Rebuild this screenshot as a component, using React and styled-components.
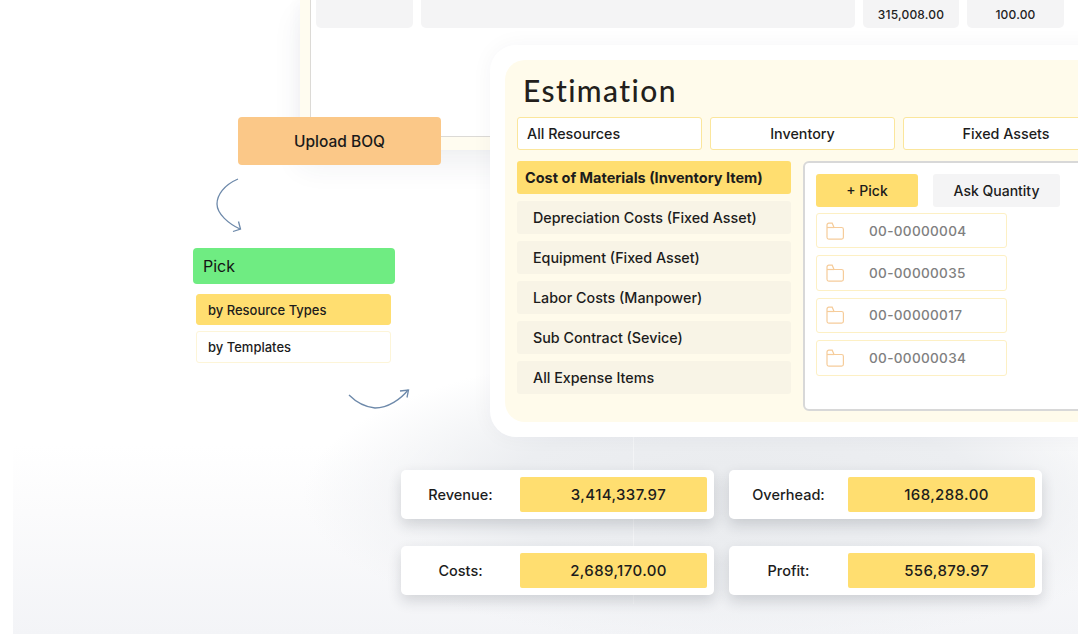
import React from 'react';
import styled, { createGlobalStyle } from 'styled-components';

const GlobalStyle = createGlobalStyle`
  html, body {
    margin: 0;
    padding: 0;
    background: #ffffff;
  }
  body {
    font-family: "Inter", "Noto Sans", sans-serif;
    color: #1c1c1c;
  }
`;

const Canvas = styled.div`
  position: relative;
  width: 1078px;
  height: 634px;
  overflow: hidden;
  background: #ffffff;
`;

const Backdrop = styled.div`
  position: absolute;
  left: 13px;
  right: 0;
  top: 330px;
  bottom: 0;
  background:
    radial-gradient(ellipse 440px 150px at 730px 165px, #e9ebee 0%, #eceef1 55%, rgba(238, 240, 243, 0) 100%),
    linear-gradient(180deg, #ffffff 0%, #ffffff 38%, #fbfbfc 60%, #f3f4f7 100%);
`;

const Hairline = styled.div`
  position: absolute;
  left: 633px;
  top: 437px;
  bottom: 30px;
  width: 1px;
  background: rgba(255, 255, 255, 0.4);
`;

/* table window peeking out behind the estimation panel */
const BackWindow = styled.div`
  position: absolute;
  left: 300px;
  top: 0;
  width: 860px;
  height: 150px;
  display: flex;
  padding: 0 0 13px 10px;
  box-sizing: border-box;
  background: #fffcf0;
  box-shadow: 0 16px 28px rgba(40, 50, 90, 0.07), -6px 0 10px rgba(40, 50, 90, 0.02);
`;

const Sheet = styled.div`
  flex: 1;
  display: flex;
  align-items: flex-start;
  gap: 8px;
  padding-left: 5px;
  background: #ffffff;
  border-left: 1px solid #dcdad6;
  border-bottom: 1px solid #dcdad6;
`;

const Cell = styled.div`
  width: ${(p) => p.$width}px;
  height: 28px;
  display: flex;
  align-items: center;
  justify-content: center;
  border-radius: 0 0 5px 5px;
  background: #f4f4f5;
  font-size: 12px;
  font-weight: 500;
  letter-spacing: 0.2px;
  color: #222222;
`;

const UploadNode = styled.div`
  position: absolute;
  left: 238px;
  top: 117px;
  width: 203px;
  height: 48px;
  display: flex;
  align-items: center;
  justify-content: center;
  border-radius: 4px;
  background: #fbc888;
  font-size: 15.5px;
  font-weight: 500;
  color: #1a1a1a;
`;

const PickNode = styled.div`
  position: absolute;
  left: 193px;
  top: 248px;
  width: 202px;
  display: flex;
  flex-direction: column;
`;

const PickHeader = styled.div`
  height: 36px;
  display: flex;
  align-items: center;
  padding-left: 10px;
  margin-bottom: 10px;
  border-radius: 4px;
  background: #6fec82;
  font-size: 16px;
  color: #141414;
`;

const PickOption = styled.div`
  box-sizing: border-box;
  width: 195px;
  height: ${(p) => (p.$active ? 31 : 32)}px;
  margin: 0 0 6px 3px;
  display: flex;
  align-items: center;
  padding-left: 11px;
  border-radius: 3px;
  background: ${(p) => (p.$active ? '#ffde70' : '#ffffff')};
  border: 1px solid ${(p) => (p.$active ? '#ffde70' : '#fdf5d8')};
  font-size: 13px;
  font-weight: 500;
  color: #1c1c1c;
`;

const ArrowDown = styled.svg`
  position: absolute;
  left: 210px;
  top: 175px;
`;

const ArrowRight = styled.svg`
  position: absolute;
  left: 345px;
  top: 385px;
`;

const Panel = styled.div`
  position: absolute;
  left: 490px;
  top: 45px;
  width: 640px;
  height: 392px;
  box-sizing: border-box;
  padding: 15px;
  border-radius: 26px;
  background: #ffffff;
  box-shadow: 0 0 22px rgba(40, 40, 60, 0.045);
`;

const PanelInner = styled.div`
  height: 100%;
  box-sizing: border-box;
  padding: 0 12px;
  border-radius: 20px;
  background: #fffbeb;
`;

const Title = styled.h1`
  margin: 0 0 0 6px;
  height: 57px;
  line-height: 60px;
  font-family: "Lato", "Noto Sans", sans-serif;
  font-size: 30px;
  font-weight: 500;
  letter-spacing: 1.4px;
  color: #231f1c;
`;

const Tabs = styled.div`
  display: flex;
  gap: 8px;
  margin-bottom: 11px;
`;

const Tab = styled.div`
  box-sizing: border-box;
  flex: none;
  width: ${(p) => p.$width}px;
  height: 33px;
  display: flex;
  align-items: center;
  justify-content: ${(p) => (p.$left ? 'flex-start' : 'center')};
  padding-left: ${(p) => (p.$left ? 9 : 0)}px;
  border: 1px solid #fbe69c;
  border-radius: 3px;
  background: #ffffff;
  font-size: 14.300px;
  font-weight: 500;
  color: #1c1c1c;
`;

const Columns = styled.div`
  display: flex;
  gap: 12px;
`;

const CostList = styled.div`
  width: 274px;
  flex: none;
  display: flex;
  flex-direction: column;
  gap: 7px;
`;

const CostItem = styled.div`
  height: 33px;
  display: flex;
  align-items: center;
  padding-left: ${(p) => (p.$active ? 8 : 16)}px;
  border-radius: 3px;
  background: ${(p) => (p.$active ? '#ffde70' : '#f8f4e6')};
  font-size: ${(p) => (p.$active ? 14.5 : 14.3)}px;
  font-weight: ${(p) => (p.$active ? 700 : 500)};
  color: #1c1c1c;
  white-space: nowrap;
`;

const PickBox = styled.div`
  box-sizing: border-box;
  width: 320px;
  height: 250px;
  padding: 11px 11px;
  border: 2px solid #d8d8d8;
  border-radius: 6px;
  background: #ffffff;
`;

const PickActions = styled.div`
  display: flex;
  gap: 15px;
  margin-bottom: 6px;
`;

const ActionButton = styled.div`
  width: ${(p) => p.$width}px;
  height: 33px;
  display: flex;
  align-items: center;
  justify-content: center;
  border-radius: 3px;
  background: ${(p) => (p.$primary ? '#ffde70' : '#f4f4f5')};
  font-size: 14px;
  font-weight: 500;
  color: #1c1c1c;
`;

const FolderList = styled.div`
  display: flex;
  flex-direction: column;
  gap: 7px;
`;

const FolderRow = styled.div`
  box-sizing: border-box;
  width: 191px;
  height: 35.4px;
  display: flex;
  align-items: center;
  gap: 25px;
  padding-left: 9px;
  border: 1px solid #fdf0c4;
  border-radius: 3px;
  font-size: 13.6px;
  font-weight: 500;
  letter-spacing: 0.3px;
  color: #808080;
`;

const Totals = styled.div`
  position: absolute;
  left: 401px;
  top: 470px;
  display: grid;
  grid-template-columns: 313px 313px;
  grid-auto-rows: 49px;
  column-gap: 15px;
  row-gap: 27px;
`;

const TotalCard = styled.div`
  display: flex;
  align-items: center;
  padding-right: 7px;
  border-radius: 5px;
  background: #ffffff;
  box-shadow: 0 6px 14px rgba(30, 35, 50, 0.16);
`;

const TotalLabel = styled.div`
  flex: 1;
  text-align: center;
  font-size: 14.5px;
  font-weight: 500;
  color: #1c1c1c;
`;

const TotalValue = styled.div`
  box-sizing: border-box;
  width: 187px;
  height: 35px;
  display: flex;
  align-items: center;
  justify-content: center;
  padding-left: 10px;
  border-radius: 2px;
  background: #ffde70;
  font-size: 15px;
  font-weight: 500;
  letter-spacing: 0.4px;
  color: #1c1c1c;
`;

const FolderIcon = () => (
  <svg width="18" height="18" viewBox="0 0 18 18" fill="none" stroke="#f6cc9a" strokeWidth="1.2">
    <path d="M1 5.5V3a1.8 1.8 0 0 1 1.8-1.8h3.4L8 5.5h7.6A1.8 1.8 0 0 1 17.4 7.3v8a1.8 1.8 0 0 1-1.8 1.8H2.8A1.8 1.8 0 0 1 1 15.3Z" />
    <path d="M1 5.5h7" />
  </svg>
);

const costs = [
  'Cost of Materials (Inventory Item)',
  'Depreciation Costs (Fixed Asset)',
  'Equipment (Fixed Asset)',
  'Labor Costs (Manpower)',
  'Sub Contract (Sevice)',
  'All Expense Items',
];

const folders = ['00-00000004', '00-00000035', '00-00000017', '00-00000034'];

const totals = [
  ['Revenue:', '3,414,337.97'],
  ['Overhead:', '168,288.00'],
  ['Costs:', '2,689,170.00'],
  ['Profit:', '556,879.97'],
];

export default function App() {
  return (
    <Canvas>
      <GlobalStyle />
      <Backdrop />
      <Hairline />

      <BackWindow>
        <Sheet>
          <Cell $width={97} />
          <Cell $width={434} />
          <Cell $width={96}>315,008.00</Cell>
          <Cell $width={97}>100.00</Cell>
        </Sheet>
      </BackWindow>

      <UploadNode>Upload BOQ</UploadNode>

      <ArrowDown width="36" height="60" viewBox="0 0 36 60" fill="none" stroke="#6d89aa" strokeWidth="1.3">
        <path d="M28 4C14 10 7 20 7 29c0 10 12 20 23 25" />
        <path d="M23 56.500 30.500 54 28.500 46.500" />
      </ArrowDown>

      <PickNode>
        <PickHeader>Pick</PickHeader>
        <PickOption $active>by Resource Types</PickOption>
        <PickOption>by Templates</PickOption>
      </PickNode>

      <ArrowRight width="68" height="30" viewBox="0 0 68 30" fill="none" stroke="#6d89aa" strokeWidth="1.3">
        <path d="M4 10c8 8 16 12 26 13 13 0 26-9 33-18" />
        <path d="M55 6 63.500 5 62 12.500" />
      </ArrowRight>

      <Panel>
        <PanelInner>
          <Title>Estimation</Title>
          <Tabs>
            <Tab $width={185} $left>All Resources</Tab>
            <Tab $width={185}>Inventory</Tab>
            <Tab $width={206}>Fixed Assets</Tab>
          </Tabs>
          <Columns>
            <CostList>
              {costs.map((c, i) => (
                <CostItem key={c} $active={i === 0}>{c}</CostItem>
              ))}
            </CostList>
            <PickBox>
              <PickActions>
                <ActionButton $primary $width={102}>+ Pick</ActionButton>
                <ActionButton $width={127}>Ask Quantity</ActionButton>
              </PickActions>
              <FolderList>
                {folders.map((f) => (
                  <FolderRow key={f}>
                    <FolderIcon />
                    {f}
                  </FolderRow>
                ))}
              </FolderList>
            </PickBox>
          </Columns>
        </PanelInner>
      </Panel>

      <Totals>
        {totals.map(([label, value]) => (
          <TotalCard key={label}>
            <TotalLabel>{label}</TotalLabel>
            <TotalValue>{value}</TotalValue>
          </TotalCard>
        ))}
      </Totals>
    </Canvas>
  );
}
